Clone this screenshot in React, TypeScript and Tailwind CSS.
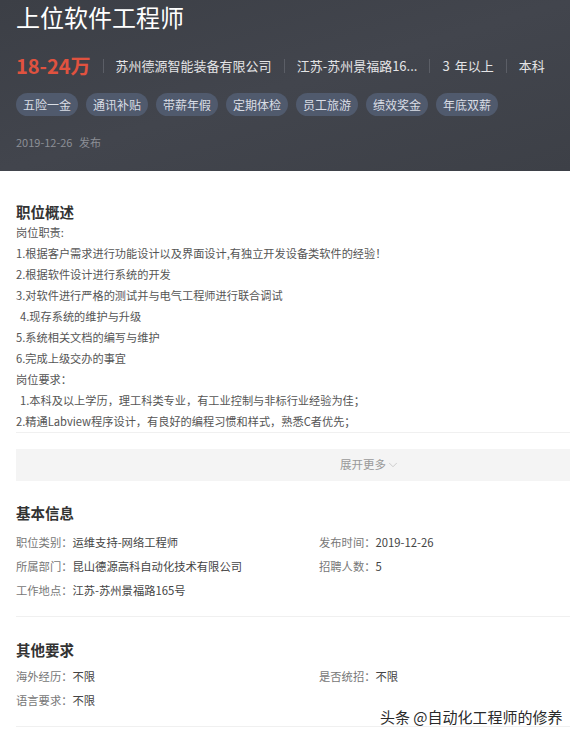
import { ChevronDown } from 'lucide-react';

const tags = ['五险一金', '通讯补贴', '带薪年假', '定期体检', '员工旅游', '绩效奖金', '年底双薪'];

const duties = [
  { text: '岗位职责:' },
  { text: '1.根据客户需求进行功能设计以及界面设计,有独立开发设备类软件的经验！' },
  { text: '2.根据软件设计进行系统的开发' },
  { text: '3.对软件进行严格的测试并与电气工程师进行联合调试' },
  { text: '4.现存系统的维护与升级', indent: true },
  { text: '5.系统相关文档的编写与维护' },
  { text: '6.完成上级交办的事宜' },
  { text: '岗位要求：' },
  { text: '1.本科及以上学历，理工科类专业，有工业控制与非标行业经验为佳；', indent: true },
  { text: '2.精通Labview程序设计，有良好的编程习惯和样式，熟悉C者优先；' },
];

const basicInfo = [
  ['职位类别', '运维支持-网络工程师'],
  ['发布时间', '2019-12-26'],
  ['所属部门', '昆山德源高科自动化技术有限公司'],
  ['招聘人数', '5'],
  ['工作地点', '江苏-苏州景福路165号'],
];

const otherInfo = [
  ['海外经历', '不限'],
  ['是否统招', '不限'],
  ['语言要求', '不限'],
];

function Sep() {
  return <span className="mx-[12px] h-[14px] w-px bg-[#5b5e66]" />;
}

function InfoItem({ label, value }: { label: string; value: string }) {
  return (
    <div className="leading-[24px] whitespace-nowrap">
      <span className="text-[#777]">{label}：</span>
      <span className="text-[#444]">{value}</span>
    </div>
  );
}

export default function App() {
  return (
    <div
      className="relative h-[738px] w-[570px] overflow-hidden bg-white"
      style={{ fontFamily: '"Noto Sans CJK SC", "Noto Sans", sans-serif' }}
    >
      {/* header */}
      <div className="bg-gradient-to-br from-[#3c3f46] via-[#42454d] to-[#3d4047] px-[16px] pt-[3px] pb-[21px]">
        <h1 className="text-[24px] leading-[28px] font-normal text-white">上位软件工程师</h1>

        <div className="mt-[21px] flex h-[28px] items-center whitespace-nowrap text-[13px] text-[#e4e4e6]">
          <span className="text-[20px] font-bold text-[#e0523f]">18-24万</span>
          <Sep />
          <span>苏州德源智能装备有限公司</span>
          <Sep />
          <span>江苏-苏州景福路16...</span>
          <Sep />
          <span>
            3<span className="ml-[5px]">年以上</span>
          </span>
          <Sep />
          <span>本科</span>
        </div>

        <div className="mt-[13px] flex gap-[8px]">
          {tags.map((t) => (
            <span
              key={t}
              className="flex h-[23px] items-center rounded-full bg-[#505a6d] px-[7px] text-[12px] text-[#d9dde5]"
            >
              {t}
            </span>
          ))}
        </div>

        <div className="mt-[18px] text-[11px] leading-[16px] text-[#8c8f96]">
          2019-12-26 <span className="ml-[4px]">发布</span>
        </div>
      </div>

      {/* overview */}
      <div className="pl-[16px] pt-[30px]">
        <h2 className="text-[14.5px] leading-[21px] font-bold text-[#333]">职位概述</h2>
        <div className="w-[708px] border-b border-[#f0f0f0] text-[11.2px] leading-[21px] text-[#555]">
          {duties.map((d, i) => (
            <p key={i} className={d.indent ? 'pl-[4px]' : ''}>
              {d.text}
            </p>
          ))}
        </div>

        <div className="mt-[16px] flex h-[32px] w-[708px] items-center justify-center bg-[#f4f4f4] text-[11.5px] text-[#999]">
          展开更多
          <ChevronDown size={14} strokeWidth={1.2} className="text-[#bbb]" />
        </div>
      </div>

      {/* basic info */}
      <div className="pl-[16px] pt-[21px]">
        <h2 className="text-[14.5px] leading-[21px] font-bold text-[#333]">基本信息</h2>
        <div className="mt-[7px] grid w-[708px] grid-cols-[303px_1fr] border-b border-[#f0f0f0] pb-[14px] text-[11.3px]">
          {basicInfo.map(([l, v]) => (
            <InfoItem key={l} label={l} value={v} />
          ))}
        </div>
      </div>

      {/* other requirements */}
      <div className="pl-[16px] pt-[22px]">
        <h2 className="text-[14.5px] leading-[21px] font-bold text-[#333]">其他要求</h2>
        <div className="mt-[4px] grid w-[708px] grid-cols-[303px_1fr] border-b border-[#f0f0f0] pb-[14px] text-[11.3px]">
          {otherInfo.map(([l, v]) => (
            <InfoItem key={l} label={l} value={v} />
          ))}
        </div>
      </div>

      {/* watermark */}
      <div
        className="absolute top-[706px] left-[380px] text-[15px] leading-[22px] whitespace-nowrap text-[#2a2a2a]"
        style={{ textShadow: '0 0 2px #fff, 0 0 1px #fff' }}
      >
        头条 @自动化工程师的修养
      </div>
    </div>
  );
}
